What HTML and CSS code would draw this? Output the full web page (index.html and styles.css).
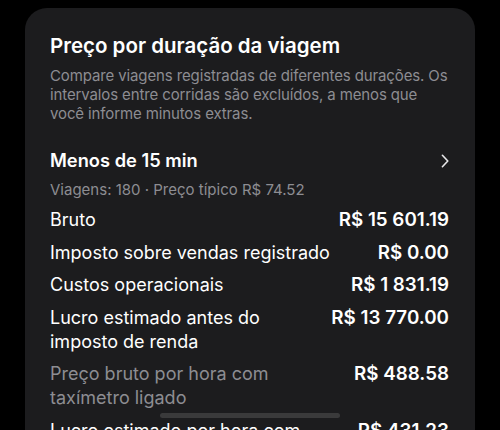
FILE: index.html
```html
<!DOCTYPE html>
<html lang="pt-BR">
<head>
<meta charset="utf-8">
<title>Preço por duração da viagem</title>
<link rel="stylesheet" href="styles.css">
</head>
<body>
<main class="screen">
  <section class="card">
    <header class="card-header">
      <h1 class="title">Preço por duração da viagem</h1>
      <p class="desc">Compare viagens registradas de diferentes durações. Os intervalos entre corridas são excluídos, a menos que você informe minutos extras.</p>
    </header>
    <div class="group">
      <div class="group-head">
        <h2 class="group-name">Menos de 15 min</h2>
        <svg class="chevron" width="8" height="14" viewBox="0 0 8 14" aria-hidden="true"><path d="M1.4 1.3 L6.8 7 L1.4 12.7" fill="none" stroke="#e8e8ea" stroke-width="1.6" stroke-linecap="round" stroke-linejoin="round"/></svg>
      </div>
      <p class="meta">Viagens: 180 · Preço típico R$ 74.52</p>
      <dl class="rows">
        <div class="row"><dt class="label">Bruto</dt><dd class="value">R$ 15 601.19</dd></div>
        <div class="row"><dt class="label">Imposto sobre vendas registrado</dt><dd class="value">R$ 0.00</dd></div>
        <div class="row"><dt class="label">Custos operacionais</dt><dd class="value">R$ 1 831.19</dd></div>
        <div class="row"><dt class="label">Lucro estimado antes do imposto de renda</dt><dd class="value">R$ 13 770.00</dd></div>
        <div class="row"><dt class="label muted">Preço bruto por hora com taxímetro ligado</dt><dd class="value">R$ 488.58</dd></div>
        <div class="row"><dt class="label">Lucro estimado por hora com taxímetro ligado</dt><dd class="value">R$ 431.23</dd></div>
      </dl>
    </div>
    <div class="scroll-indicator"></div>
  </section>
</main>
</body>
</html>
```

FILE: styles.css
```css
html, body {
  margin: 0;
  padding: 0;
  background: #000;
  height: 100%;
  overflow: hidden;
}
body {
  font-family: Inter, "Noto Sans", "Liberation Sans", sans-serif;
  color: #fff;
}
.screen {
  padding: 8px 25px 0 25px;
}
.card {
  position: relative;
  background: #1c1c1e;
  border-radius: 22px 22px 0 0;
  padding: 26px 26px 40px 25px;
  min-height: 500px;
  box-sizing: border-box;
}
.card-header {
  display: flex;
  flex-direction: column;
  gap: 8px;
}
.title {
  margin: 0;
  font-size: 20.5px;
  line-height: 24px;
  font-weight: 600;
}
.desc {
  margin: 0;
  font-size: 15px;
  line-height: 19px;
  letter-spacing: -0.12px;
  color: #8d8d92;
}
.group {
  margin-top: 26px;
}
.group-head {
  display: flex;
  align-items: center;
  justify-content: space-between;
}
.group-name {
  margin: 0;
  font-size: 18.3px;
  line-height: 22px;
  font-weight: 600;
}
.chevron {
  display: block;
  margin-top: 2px;
}
.meta {
  margin: 10px 0 0;
  font-size: 15px;
  line-height: 18px;
  color: #8d8d92;
}
.rows {
  margin: 9px 0 0;
  display: flex;
  flex-direction: column;
  gap: 8.5px;
}
.row {
  display: flex;
  justify-content: space-between;
  align-items: flex-start;
  gap: 16px;
}
.label {
  margin: 0;
  font-size: 18px;
  line-height: 24px;
  color: #fff;
}
.label.muted {
  color: #8d8d92;
}
.value {
  margin: 0;
  font-size: 18.8px;
  line-height: 24px;
  font-weight: 600;
  white-space: nowrap;
  text-align: right;
}
.scroll-indicator {
  position: absolute;
  left: 135px;
  top: 405px;
  width: 180px;
  height: 5px;
  border-radius: 3px;
  background: #3a3a3b;
}
```
